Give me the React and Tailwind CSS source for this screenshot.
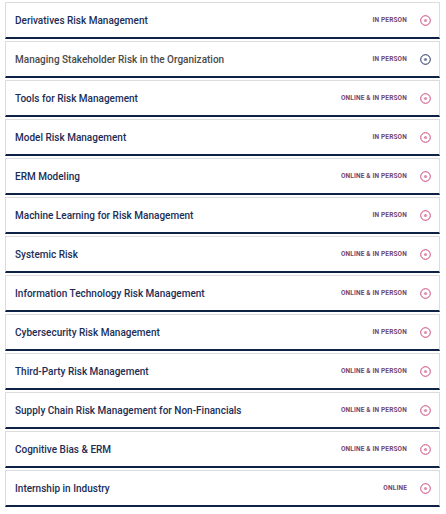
const courses = [
  { name: "Derivatives Risk Management", mode: "IN PERSON" },
  { name: "Managing Stakeholder Risk in the Organization", mode: "IN PERSON", active: true },
  { name: "Tools for Risk Management", mode: "ONLINE & IN PERSON" },
  { name: "Model Risk Management", mode: "IN PERSON" },
  { name: "ERM Modeling", mode: "ONLINE & IN PERSON" },
  { name: "Machine Learning for Risk Management", mode: "IN PERSON" },
  { name: "Systemic Risk", mode: "ONLINE & IN PERSON" },
  { name: "Information Technology Risk Management", mode: "ONLINE & IN PERSON" },
  { name: "Cybersecurity Risk Management", mode: "IN PERSON" },
  { name: "Third-Party Risk Management", mode: "ONLINE & IN PERSON" },
  { name: "Supply Chain Risk Management for Non-Financials", mode: "ONLINE & IN PERSON" },
  { name: "Cognitive Bias & ERM", mode: "ONLINE & IN PERSON" },
  { name: "Internship in Industry", mode: "ONLINE" },
];

const Toggle = ({ active }) => (
  <svg width="11" height="11" viewBox="0 0 11 11" className={`block ${active ? "text-[#1c2d55]" : "text-[#c9477a]"}`}>
    <circle cx="5.5" cy="5.5" r="4.8" fill="none" stroke="currentColor" strokeWidth="1" />
    <circle cx="5.5" cy="5.5" r="1.6" fill="currentColor" opacity="0.6" />
  </svg>
);

const Curso = ({ curso }) => {
  const { name, mode, active } = curso;
  return (
    <div className="h-[37px] border border-[#dcdcdc] border-b-2 border-b-[#0d2245] bg-white flex items-center justify-between pl-[9px] pr-[8px] pt-[1px]">
      <p className={`text-[10px] leading-none font-medium ${active ? "text-[#4a4a4a]" : "text-[#1c2d55]"}`}>{name}</p>
      <div className="flex items-center gap-[13px]">
        <span className="text-[6.5px] leading-none font-bold text-[#74466f] tracking-[0.15px]">{mode}</span>
        <Toggle active={active} />
      </div>
    </div>
  );
};

const App = () => {
  return (
    <div className="w-[446px] h-[514px] bg-white pt-[2px] pl-[5px] pr-[6px] flex flex-col gap-[2px]" style={{ fontFamily: "Roboto, 'Liberation Sans', sans-serif" }}>
      {courses.map((c) => (
        <Curso key={c.name} curso={c} />
      ))}
    </div>
  );
};

export default App;
